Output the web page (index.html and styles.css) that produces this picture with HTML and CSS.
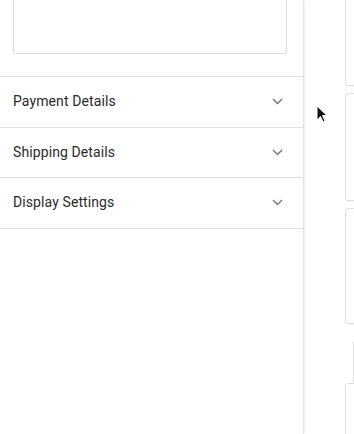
FILE: index.html
```html
<!DOCTYPE html>
<html>
<head>
<meta charset="utf-8">
<link rel="stylesheet" href="styles.css">
</head>
<body>
<div class="app">
  <aside class="panel">
    <div class="notes-section">
      <div class="notes-box"></div>
    </div>
    <div class="acc-row"><span>Payment Details</span><svg class="chev" viewBox="0 0 11 7" width="11" height="7"><path d="M1 1 L5.5 5.5 L10 1" fill="none" stroke="#7a7a7a" stroke-width="1.5"/></svg></div>
    <div class="acc-row"><span>Shipping Details</span><svg class="chev" viewBox="0 0 11 7" width="11" height="7"><path d="M1 1 L5.5 5.5 L10 1" fill="none" stroke="#7a7a7a" stroke-width="1.5"/></svg></div>
    <div class="acc-row"><span>Display Settings</span><svg class="chev" viewBox="0 0 11 7" width="11" height="7"><path d="M1 1 L5.5 5.5 L10 1" fill="none" stroke="#7a7a7a" stroke-width="1.5"/></svg></div>
  </aside>
  <div class="gutter"></div>
  <div class="cards">
    <div class="card c1"></div>
    <div class="card c2"></div>
    <div class="card c3"></div>
    <div class="mini"></div>
    <div class="card c4"></div>
  </div>
  <svg class="cursor" width="12" height="19" viewBox="0 0 12 19"><path d="M1 1 L1 15 L4.5 11.5 L7 17 L9 16 L6.5 10.5 L11 10.5 Z" fill="#111" stroke="#fff" stroke-width="1"/></svg>
</div>
</body>
</html>
```
FILE: styles.css
```css
html, body {
  margin: 0;
  padding: 0;
  background: #fff;
  overflow: hidden;
}
.app {
  position: relative;
  display: flex;
  height: 434px;
  width: 354px;
  font-family: Roboto, "Noto Sans", sans-serif;
  overflow: hidden;
}
.panel {
  width: 303px;
  flex: none;
  border-right: 1px solid #e4e4e4;
  box-shadow: 1px 0 2px rgba(0,0,0,0.06);
  height: 434px;
}
.notes-section {
  padding: 0 16px 22px 13px;
  border-bottom: 1px solid #e0e0e0;
}
.notes-box {
  height: 53px;
  border: 1px solid #dcdcdc;
  border-top: none;
  border-radius: 0 0 2px 2px;
}
.acc-row {
  height: 49.6px;
  border-bottom: 1px solid #e0e0e0;
  display: flex;
  align-items: center;
  justify-content: space-between;
  padding: 0 20px 0 13px;
  font-size: 14px;
  letter-spacing: 0.1px;
  color: #2b2b2b;
}
.acc-row span {
  margin-top: -1px;
}
.chev {
  display: block;
}
.gutter {
  width: 41px;
  flex: none;
}
.cards {
  flex: 1;
  display: flex;
  flex-direction: column;
  gap: 7px;
  margin-top: -10px;
}
.card {
  border: 1px solid #e0e0e0;
  border-radius: 3px;
  width: 60px;
  flex: none;
  box-shadow: 0 1px 1px rgba(0,0,0,0.05);
}
.c1 { height: 94px; }
.c2 { height: 106px; }
.c3 { height: 114px; }
.mini {
  height: 40px;
  margin-top: 11px;
  margin-left: 8px;
  border-left: 1px solid #e0e0e0;
  flex: none;
}
.c4 { height: 80px; margin-top: -6px; }
.cursor {
  position: absolute;
  left: 316px;
  top: 105px;
}
```
